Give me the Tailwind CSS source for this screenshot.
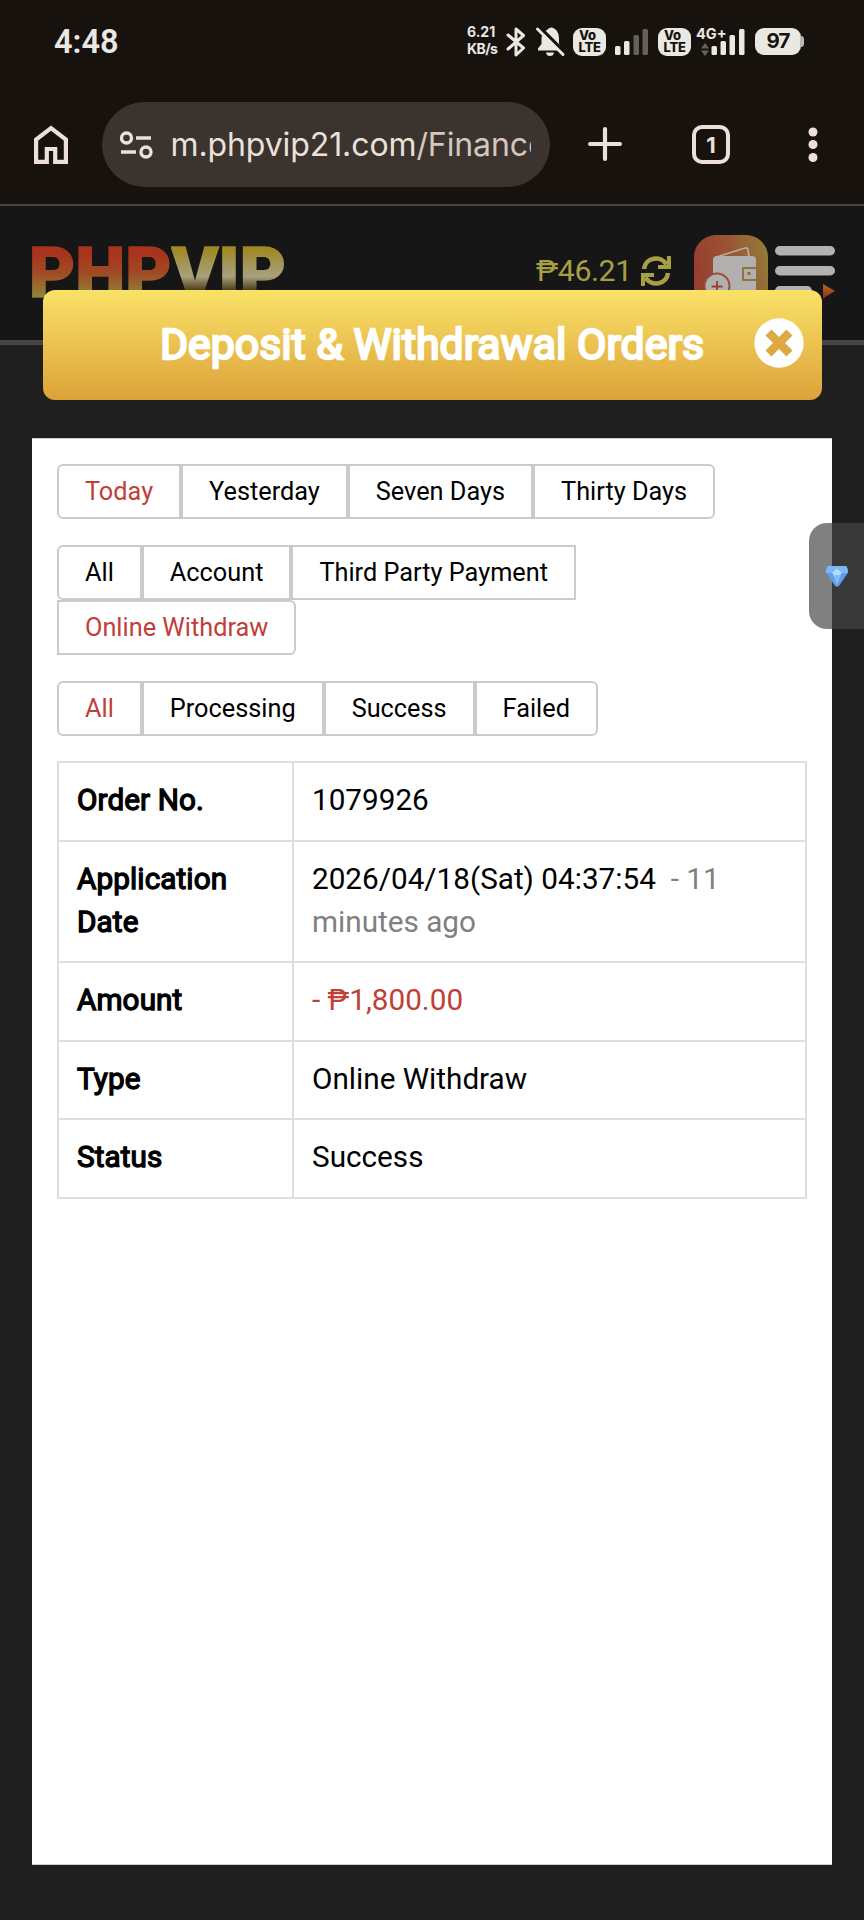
<!DOCTYPE html>
<html lang="en">
<head>
<meta charset="utf-8">
<title>Deposit &amp; Withdrawal Orders</title>
<script src="https://cdn.jsdelivr.net/npm/@tailwindcss/browser@4"></script>
</head>
<body class="relative h-[1920px] w-[864px] overflow-hidden bg-[#1f1f1f] font-['Roboto',sans-serif] text-black">

<!-- Phone status bar and browser toolbar -->
<div class="h-[206px] border-b-2 border-[#4b4740] bg-[#17120e]">
  <div class="flex h-[83px] items-center pl-[54px] text-[#e9e8e3]">
    <div class="w-[413px] pt-0.5 text-[32.5px] leading-none font-semibold">4:48</div>
    <div class="w-[36px] pb-1 font-['Inter',sans-serif] text-[14px] leading-[17px] font-bold">6.21<br><span class="tracking-[-0.6px]">KB/s</span></div>
    <svg class="-ml-0.5 h-[32px] w-[30px]" viewBox="0 0 30 32" fill="none" stroke="currentColor" stroke-width="3" stroke-linejoin="round" stroke-linecap="round"><path d="M7 9L22.500 22L15 29V3L22.500 9.500L7 23"/></svg>
    <svg class="ml-[3px] h-[32px] w-[32px]" viewBox="0 0 32 32"><path fill="currentColor" d="M4 24.500V22.500L7.500 18V12Q8 6 13 4Q15 1 18 1.500Q25 4 25 12V18L28 22.500V24.500ZM12 26.500H20Q19.500 30 16 30Q12.500 30 12 26.500Z"/><path d="M5 1L32 28" stroke="#17120e" stroke-width="4"/><path d="M3.500 3L29 28.500" stroke="currentColor" stroke-width="3" stroke-linecap="round"/></svg>
    <div class="ml-[7px] flex h-[28px] w-[33px] flex-col items-center justify-center rounded-[9px] bg-[#e9e8e3] font-['Inter',sans-serif] text-[13px] leading-[11.500px] font-extrabold text-[#17120e]"><span class="-ml-1">Vo</span><span class="tracking-[-0.3px]">LTE</span></div>
    <svg class="ml-[8px] h-[28px] w-[35px]" viewBox="0 0 35 28" fill="currentColor"><rect x="1" y="18" width="5.500" height="9" rx="1.500"/><rect x="10" y="13" width="5.500" height="14" rx="1.500"/><rect x="19.500" y="7" width="5.500" height="20" rx="1.500" fill="#66605d"/><rect x="28.500" y="1" width="5.500" height="26" rx="1.500" fill="#66605d"/></svg>
    <div class="ml-[9px] flex h-[28px] w-[33px] flex-col items-center justify-center rounded-[9px] bg-[#e9e8e3] font-['Inter',sans-serif] text-[13px] leading-[11.500px] font-extrabold text-[#17120e]"><span class="-ml-1">Vo</span><span class="tracking-[-0.3px]">LTE</span></div>
    <div class="relative ml-[5px] h-[30px] w-[50px]">
      <span class="absolute -top-[2px] left-0 font-['Inter',sans-serif] text-[14.500px] leading-[17px] font-bold">4G+</span>
      <svg class="h-[30px] w-[50px]" viewBox="0 0 50 30" fill="currentColor"><path fill="#66605d" d="M5 21.500L9 16L13 21.500ZM5 23.500L9 29L13 23.500Z"/><rect x="15.500" y="19" width="5.500" height="9" rx="1.500"/><rect x="24.500" y="14" width="5.500" height="14" rx="1.500"/><rect x="33.500" y="8" width="5.500" height="20" rx="1.500"/><rect x="43" y="2" width="5.500" height="26" rx="1.500"/></svg>
    </div>
    <div class="ml-[9px] flex h-[27px] w-[46px] items-center justify-center rounded-[9px] bg-[#e9e8e3] font-['Inter',sans-serif] text-[20.500px] leading-none font-bold tracking-[-0.8px] text-[#17120e]">97</div>
    <div class="-ml-px h-[11px] w-[4px] rounded-r-[3px] bg-[#b9b7b3]"></div>
  </div>

  <div class="flex h-[123px] items-start pt-[19px] pl-[34px] text-[#ece0d8]">
    <svg class="mt-[23px] h-[40px] w-[34px]" viewBox="0 0 34 40" fill="none" stroke="currentColor" stroke-width="4.200"><path d="M2.100 36.900V14.500L17 3.200L31.900 14.500V36.900H21.200V24H12.800V36.900Z"/></svg>
    <div class="ml-[34px] flex h-[85px] w-[448px] items-center rounded-full bg-[#3b332e] pl-[17px]">
      <svg class="h-[28px] w-[34px]" viewBox="0 0 34 28" fill="none" stroke="currentColor" stroke-width="3.400"><circle cx="7.500" cy="7" r="5"/><path d="M17 7H32M2 21H17"/><circle cx="27" cy="21" r="5"/></svg>
      <div class="ml-[17.500px] w-[360.500px] overflow-hidden font-['Inter',sans-serif] text-[32px] leading-[48px] tracking-[-0.1px] whitespace-nowrap">m.phpvip21.com<span class="text-[#d3c7bf]">/Finance</span></div>
    </div>
    <svg class="mt-[25px] ml-[38px] h-[34px] w-[34px]" viewBox="0 0 34 34" stroke="currentColor" stroke-width="4.200" stroke-linecap="round"><path d="M17 2.100V31.900M2.100 17H31.900"/></svg>
    <div class="mt-[23px] ml-[70px] flex h-[39px] w-[38px] items-center justify-center rounded-[10px] border-4 border-[#ece0d8] font-['Inter',sans-serif] text-[22px] leading-none font-bold">1</div>
    <svg class="mt-[25px] ml-[78px] h-[36px] w-[10px]" viewBox="0 0 10 36" fill="currentColor"><circle cx="5" cy="5" r="4.500"/><circle cx="5" cy="17.500" r="4.500"/><circle cx="5" cy="30.500" r="4.500"/></svg>
  </div>
</div>

<!-- Dimmed site header -->
<header class="flex h-[139px] items-start border-b-[5px] border-[#464646] bg-[#161616] pl-[29px]">
  <div class="mt-[31px] flex w-[507px] text-[71px] leading-[72px] font-black [-webkit-text-stroke:1.500px_transparent]"><span class="bg-linear-to-b from-[#a8341d] from-25% via-[#a04a25] via-50% to-[#8c8136] to-80% bg-clip-text text-transparent">PHP</span><span class="bg-linear-to-b from-[#a08a26] from-20% via-[#a7a17d] via-55% to-[#4b3a12] to-75% bg-clip-text text-transparent">VIP</span></div>
  <div class="mt-[47px] w-[105px] text-[30.300px] leading-[36px] tracking-[-0.4px] text-[#a79f45]">₱46.21</div>
  <svg class="mt-[50px] h-[30px] w-[30px] text-[#a79f45]" viewBox="0 0 30 30"><g id="half"><path d="M3 13A12 11.500 0 0 1 25.500 8.500" fill="none" stroke="currentColor" stroke-width="4.600"/><path fill="currentColor" d="M26 0H30V13H17V9H26Z"/></g><use href="#half" transform="rotate(180 15 15)"/></svg>
  <svg class="mt-[29px] ml-[23px] h-[75px] w-[75px]" viewBox="0 0 75 75">
    <defs><linearGradient id="w" x1="0" x2="1" y1=".3" y2="0"><stop offset="0" stop-color="#964030"/><stop offset=".45" stop-color="#9b5233"/><stop offset="1" stop-color="#918239"/></linearGradient></defs>
    <rect width="74" height="75" rx="22" fill="url(#w)"/>
    <path d="M21 22.500L51 13Q53.500 12.500 54 15L55 22" fill="none" stroke="#b3aaa3" stroke-width="1.800"/>
    <rect x="19" y="21" width="43" height="44" rx="4" fill="#b2b0ae"/>
    <rect x="49" y="33" width="14" height="12" fill="#b2b0ae" stroke="#8f6c34" stroke-width="1.800"/><rect x="53.500" y="37" width="3" height="3" fill="#8f6c34"/>
    <circle cx="23" cy="51" r="12.500" fill="#b2b0ae" stroke="#994d36" stroke-width="2"/><path d="M23 46V57M17.500 51.500H28.500" stroke="#994032" stroke-width="1.800"/>
  </svg>
  <svg class="mt-[40px] ml-[6px] h-[56px] w-[62px]" viewBox="0 0 62 56"><defs><linearGradient id="a" x1="0" x2="0" y1="0" y2="1"><stop offset=".3" stop-color="#a75d20"/><stop offset="1" stop-color="#8d2714"/></linearGradient></defs><g fill="#b2b2b2"><rect y="0" width="60" height="9.500" rx="4.700"/><rect y="20" width="60" height="9.500" rx="4.700"/><rect y="40" width="37" height="9.500" rx="4.700"/></g><path d="M48 38L60 45L48 52.500Z" fill="url(#a)"/></svg>
</header>

<!-- Order list panel -->
<main class="mt-[93px] ml-[32px] h-[1427px] w-[800px] border-y border-[#cfcfcf] bg-white px-[25px] pt-[25px]">
  <nav class="flex h-[55px] text-[25.300px] leading-none *:flex *:items-center *:border-2 *:border-[#cbcbcb] *:px-[26px]">
    <span class="rounded-l-md text-[#bf4038]">Today</span><span>Yesterday</span><span>Seven Days</span><span class="rounded-r-md">Thirty Days</span>
  </nav>
  <nav class="mt-[26px] flex w-[560px] flex-wrap text-[25.300px] leading-none *:flex *:h-[55px] *:items-center *:border-2 *:border-[#cbcbcb] *:px-[26px]">
    <span class="rounded-l-md">All</span><span>Account</span><span>Third Party Payment</span><span class="rounded-r-md text-[#bf4038]">Online Withdraw</span>
  </nav>
  <nav class="mt-[26px] flex h-[55px] text-[25.300px] leading-none *:flex *:items-center *:border-2 *:border-[#cbcbcb] *:px-[26px]">
    <span class="rounded-l-md text-[#bf4038]">All</span><span>Processing</span><span>Success</span><span class="rounded-r-md">Failed</span>
  </nav>

  <dl class="mt-[25px] w-[750px] border-2 border-[#dedede] text-[29.700px] leading-[42.700px]">
    <div class="flex h-[79px] border-b-2 border-[#dedede]">
      <dt class="w-[235px] border-r-2 border-[#dedede] pt-4 pl-[18px] tracking-[0.1px] [-webkit-text-stroke:1.300px_#000]">Order No.</dt><dd class="flex-1 pt-4 pl-[18px]">1079926</dd>
    </div>
    <div class="flex h-[121px] border-b-2 border-[#dedede]">
      <dt class="w-[235px] border-r-2 border-[#dedede] pt-4 pl-[18px] tracking-[0.1px] [-webkit-text-stroke:1.300px_#000]">Application<br>Date</dt><dd class="flex-1 pt-4 pl-[18px]">2026/04/18(Sat) 04:37:54 <span class="ml-[7.500px] text-[#808080]">- 11<br>minutes ago</span></dd>
    </div>
    <div class="flex h-[79px] border-b-2 border-[#dedede]">
      <dt class="w-[235px] border-r-2 border-[#dedede] pt-4 pl-[18px] tracking-[0.1px] [-webkit-text-stroke:1.300px_#000]">Amount</dt><dd class="flex-1 pt-4 pl-[18px] text-[#bf4038]">- ₱1,800.00</dd>
    </div>
    <div class="flex h-[78px] border-b-2 border-[#dedede]">
      <dt class="w-[235px] border-r-2 border-[#dedede] pt-4 pl-[18px] tracking-[0.1px] [-webkit-text-stroke:1.300px_#000]">Type</dt><dd class="flex-1 pt-4 pl-[18px]">Online Withdraw</dd>
    </div>
    <div class="flex h-[77px]">
      <dt class="w-[235px] border-r-2 border-[#dedede] pt-4 pl-[18px] tracking-[0.1px] [-webkit-text-stroke:1.300px_#000]">Status</dt><dd class="flex-1 pt-4 pl-[18px]">Success</dd>
    </div>
  </dl>
</main>

<!-- Modal title bar over the header -->
<div class="absolute top-[289.500px] left-[42.500px] flex h-[110.500px] w-[779px] items-center justify-center rounded-xl bg-linear-to-b from-[#f9e267] to-[#dca239]">
  <h1 class="text-[42.800px] leading-none text-white [-webkit-text-stroke:2.300px_#fff]">Deposit &amp; Withdrawal Orders</h1>
  <svg class="absolute top-[28px] right-[17.500px] h-[50px] w-[50px]" viewBox="0 0 50 50"><circle cx="25" cy="25" r="24.700" fill="#fff"/><path d="M17.500 17.500L32.500 32.500M32.500 17.500L17.500 32.500" stroke="#dda944" stroke-width="8.500" stroke-linecap="square"/></svg>
</div>

<!-- Side handle -->
<div class="absolute top-[522.500px] left-[808.500px] flex h-[106.500px] w-[56px] items-center rounded-l-[18px] bg-[#444]/68 pl-[17px]">
  <svg class="h-[22px] w-[22px]" viewBox="0 0 22 22"><path d="M2 1H20Q22 3 21.800 8L12.500 21.500H9.500L.2 8Q0 3 2 1Z" fill="#5a9fee"/><path d="M2 1H20Q22 3 21.800 8H.2Q0 3 2 1Z" fill="#7db8f6"/><path d="M6 8L11 3.500L16 8L14 10H8Z" fill="#b5dcff"/><path d="M7 10H15L11 20Z" fill="#86bdf5"/></svg>
</div>
</body>
</html>
